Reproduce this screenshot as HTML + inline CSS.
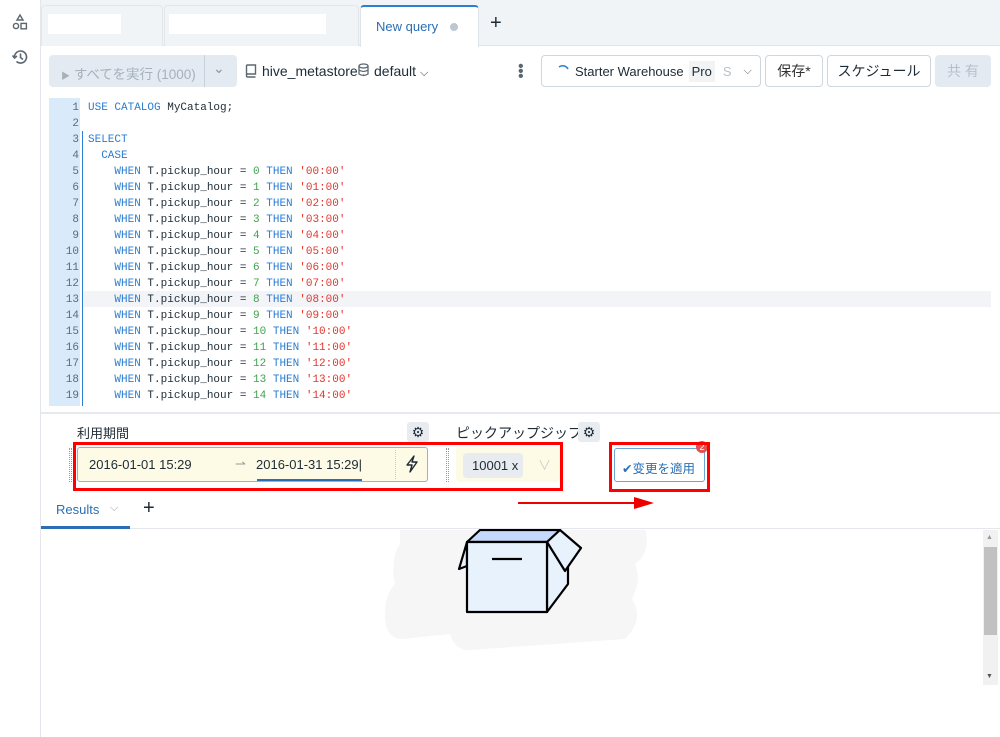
<!DOCTYPE html>
<html><head><meta charset="utf-8"><style>
*{box-sizing:border-box;margin:0;padding:0}
body{width:1000px;height:737px;overflow:hidden;background:#fff;font-family:"Liberation Sans","Noto Sans CJK JP",sans-serif;color:#1d2b36;position:relative;font-size:13px}
.abs{position:absolute;white-space:nowrap}
.side{left:0;top:0;width:41px;height:737px;border-right:1px solid #e3e7eb;background:#fff}
.tabs{left:41px;top:0;width:959px;height:46px;background:#f1f4f7;border-bottom:1px solid #dfe4e9}
.code{font-family:"Liberation Mono",monospace;font-size:11px;line-height:16px;white-space:pre}
.k{color:#2a7ed3}.n{color:#3fa34d}.s{color:#e0372c}
.btn{border:1px solid #cfd6dd;border-radius:4px;background:#fff;height:32px;top:55px;display:flex;align-items:center;justify-content:center;font-size:14px}
</style></head><body>
<div class="abs side">
<svg class="abs" style="left:11px;top:13px" width="18" height="18" viewBox="0 0 18 18" fill="none" stroke="#5b6670" stroke-width="1.4"><path d="M9 2 L12 7 L6 7 Z"/><circle cx="5" cy="13" r="2.6"/><rect x="10" y="10.4" width="5.4" height="5.4"/></svg>
<svg class="abs" style="left:11px;top:48px" width="18" height="18" viewBox="0 0 18 18" fill="none" stroke="#5b6670" stroke-width="1.6"><path d="M3.5 9 A6 6 0 1 1 5.5 13.5"/><path d="M1.5 7.5 L3.5 10 L6 8"/><path d="M9.5 5.5 V9.5 L12 11.5"/></svg>
</div>
<div class="abs tabs"></div>
<div class="abs" style="left:41px;top:5px;width:122px;height:41px;background:#f1f4f7;border:1px solid #e3e7eb;border-bottom:none;border-radius:4px 4px 0 0"></div>
<div class="abs" style="left:48px;top:14px;width:73px;height:20px;background:#fff"></div>
<div class="abs" style="left:164px;top:5px;width:195px;height:41px;background:#f1f4f7;border:1px solid #e3e7eb;border-bottom:none;border-radius:4px 4px 0 0"></div>
<div class="abs" style="left:169px;top:14px;width:157px;height:20px;background:#fff"></div>
<div class="abs" style="left:360px;top:5px;width:119px;height:42px;background:#fff;border:1px solid #dfe4e9;border-top:2px solid #2a7ed3;border-bottom:none;border-radius:4px 4px 0 0;font-size:13px;color:#2a6fb5;padding:12px 0 0 15px">New query <span style="display:inline-block;width:8px;height:8px;border-radius:50%;background:#bcc7d2;margin-left:8px"></span></div>
<div class="abs" style="left:490px;top:12px;font-size:20px;color:#1d2b36">+</div>

<div class="abs" style="left:49px;top:55px;width:188px;height:32px;background:#e3eaf1;border-radius:4px;color:#a6b1bc;font-size:13.5px;padding:8px 0 0 12px"><span style="font-size:9px">▶</span> すべてを実行 (1000)</div>
<div class="abs" style="left:204px;top:55px;width:1px;height:32px;background:#c7d1db"></div>
<div class="abs" style="left:213px;top:60px;color:#8a96a2;font-size:14px">⌄</div>
<svg class="abs" style="left:245px;top:64px" width="12" height="14" viewBox="0 0 12 14" fill="none" stroke="#5b6670" stroke-width="1.4"><path d="M1.5 11 V2 Q1.5 1 2.5 1 H10.5 V10 H2.5 Q1.5 10 1.5 11.5 Q1.5 13 2.5 13 H10.5"/></svg>
<div class="abs" style="left:262px;top:63px;font-size:14px">hive_metastore .</div>
<svg class="abs" style="left:358px;top:63px" width="11" height="14" viewBox="0 0 11 14" fill="none" stroke="#5b6670" stroke-width="1.3"><ellipse cx="5.5" cy="3" rx="4.5" ry="2"/><path d="M1 3 V11 Q5.5 14 10 11 V3 M1 7 Q5.5 10 10 7"/></svg>
<div class="abs" style="left:374px;top:63px;font-size:14px">default <span style="font-size:11px">⌵</span></div>
<div class="abs" style="left:518px;top:64px;width:4px;line-height:5px;color:#5b6670;font-size:16px">•<br>•<br>•</div>
<div class="abs btn" style="left:541px;width:220px;justify-content:flex-start;padding-left:14px;font-size:13px;white-space:nowrap">
<svg width="14" height="14" viewBox="0 0 14 14" fill="none" stroke="#2a7ed3" stroke-width="1.5"><path d="M3 3 A6 6 0 0 1 12 5"/></svg>
<span style="margin-left:5px">Starter Warehouse</span><span style="background:#f1f3f5;padding:3px 3px;margin-left:5px">Pro</span><span style="color:#b8c0c8;margin-left:8px">S</span><span style="margin-left:12px;font-size:11px;color:#5b6670">⌵</span></div>
<div class="abs btn" style="left:765px;width:58px;color:#333">保存*</div>
<div class="abs btn" style="left:827px;width:104px">スケジュール</div>
<div class="abs btn" style="left:935px;width:56px;background:#e3eaf1;border-color:#e3eaf1;color:#b5c0cb">共 有</div>

<div class="abs" style="left:49px;top:98px;width:31px;height:308px;background:#d9eafb"></div>
<div class="abs" style="left:82px;top:131px;width:1px;height:275px;background:#2a7ed3"></div>
<div class="abs" style="left:83px;top:291px;width:908px;height:16px;background:#f2f4f8"></div>
<div class="abs code" style="left:49px;top:100px;width:30px;text-align:right;color:#5e6b77">1
2
3
4
5
6
7
8
9
10
11
12
13
14
15
16
17
18
19</div>
<div class="abs code" style="left:88px;top:100px"><span class="k">USE CATALOG</span> MyCatalog;

<span class="k">SELECT</span>
  <span class="k">CASE</span>
    <span class="k">WHEN</span> T.pickup_hour = <span class="n">0</span> <span class="k">THEN</span> <span class="s">'00:00'</span>
    <span class="k">WHEN</span> T.pickup_hour = <span class="n">1</span> <span class="k">THEN</span> <span class="s">'01:00'</span>
    <span class="k">WHEN</span> T.pickup_hour = <span class="n">2</span> <span class="k">THEN</span> <span class="s">'02:00'</span>
    <span class="k">WHEN</span> T.pickup_hour = <span class="n">3</span> <span class="k">THEN</span> <span class="s">'03:00'</span>
    <span class="k">WHEN</span> T.pickup_hour = <span class="n">4</span> <span class="k">THEN</span> <span class="s">'04:00'</span>
    <span class="k">WHEN</span> T.pickup_hour = <span class="n">5</span> <span class="k">THEN</span> <span class="s">'05:00'</span>
    <span class="k">WHEN</span> T.pickup_hour = <span class="n">6</span> <span class="k">THEN</span> <span class="s">'06:00'</span>
    <span class="k">WHEN</span> T.pickup_hour = <span class="n">7</span> <span class="k">THEN</span> <span class="s">'07:00'</span>
    <span class="k">WHEN</span> T.pickup_hour = <span class="n">8</span> <span class="k">THEN</span> <span class="s">'08:00'</span>
    <span class="k">WHEN</span> T.pickup_hour = <span class="n">9</span> <span class="k">THEN</span> <span class="s">'09:00'</span>
    <span class="k">WHEN</span> T.pickup_hour = <span class="n">10</span> <span class="k">THEN</span> <span class="s">'10:00'</span>
    <span class="k">WHEN</span> T.pickup_hour = <span class="n">11</span> <span class="k">THEN</span> <span class="s">'11:00'</span>
    <span class="k">WHEN</span> T.pickup_hour = <span class="n">12</span> <span class="k">THEN</span> <span class="s">'12:00'</span>
    <span class="k">WHEN</span> T.pickup_hour = <span class="n">13</span> <span class="k">THEN</span> <span class="s">'13:00'</span>
    <span class="k">WHEN</span> T.pickup_hour = <span class="n">14</span> <span class="k">THEN</span> <span class="s">'14:00'</span></div>
<div class="abs" style="left:41px;top:412px;width:959px;height:2px;background:#e6eaee"></div>

<div class="abs" style="left:77px;top:423px;font-size:13px">利用期間</div>
<div class="abs" style="left:407px;top:422px;width:22px;height:20px;background:#e8ecf0;border-radius:3px;text-align:center;font-size:14px;line-height:20px">⚙</div>
<div class="abs" style="left:456px;top:423px;font-size:14px">ピックアップジップ</div>
<div class="abs" style="left:578px;top:422px;width:22px;height:20px;background:#e8ecf0;border-radius:3px;text-align:center;font-size:14px;line-height:20px">⚙</div>
<div class="abs" style="left:69px;top:448px;width:3px;height:34px;border-left:1px dotted #999;border-right:1px dotted #999"></div>
<div class="abs" style="left:77px;top:447px;width:351px;height:35px;background:#fdfbe6;border:1px solid #8fb3d9;border-radius:3px"></div>
<div class="abs" style="left:89px;top:457px;font-size:13px">2016-01-01 15:29</div>
<div class="abs" style="left:235px;top:456px;font-size:13px;color:#999">⇀</div>
<div class="abs" style="left:256px;top:457px;font-size:13px">2016-01-31 15:29|</div>
<div class="abs" style="left:257px;top:479px;width:105px;height:2px;background:#2a6fb5"></div>
<div class="abs" style="left:395px;top:450px;width:1px;height:29px;border-left:1px dotted #ccc"></div>
<svg class="abs" style="left:405px;top:455px" width="14" height="18" viewBox="0 0 14 18" fill="none" stroke="#1d2b36" stroke-width="1.4" stroke-linejoin="round"><path d="M9 1 L2 10 H7 L5 17 L12 7 H7 Z"/></svg>
<div class="abs" style="left:446px;top:448px;width:3px;height:34px;border-left:1px dotted #999;border-right:1px dotted #999"></div>
<div class="abs" style="left:456px;top:447px;width:104px;height:35px;background:#fdfbe6;border-radius:3px"></div>
<div class="abs" style="left:463px;top:453px;width:60px;height:25px;background:#e8ebef;border-radius:4px;font-size:13px;padding:5px 0 0 9px">10001 x</div>
<div class="abs" style="left:538px;top:455px;color:#ccc;font-size:13px">∨</div>
<div class="abs" style="left:73px;top:442px;width:490px;height:49px;border:3px solid #f00"></div>
<div class="abs" style="left:614px;top:448px;width:91px;height:34px;border:1px solid #6fa3d6;border-radius:3px;color:#2a6fb5;font-size:12.5px;padding:9px 0 0 7px">✔变更を適用</div>
<div class="abs" style="left:696px;top:441px;width:12px;height:12px;border-radius:50%;background:#e25050;color:#fff;font-size:9px;text-align:center;line-height:12px">2</div>
<div class="abs" style="left:609px;top:442px;width:101px;height:50px;border:3px solid #f00"></div>
<div class="abs" style="left:518px;top:502px;width:120px;height:2px;background:#e00"></div>
<svg class="abs" style="left:634px;top:497px" width="20" height="12"><path d="M0 0 L20 6 L0 12Z" fill="#e00"/></svg>

<div class="abs" style="left:56px;top:502px;font-size:13px;color:#2a6fb5">Results</div>
<div class="abs" style="left:110px;top:502px;font-size:11px;color:#999">⌵</div>
<div class="abs" style="left:143px;top:497px;font-size:20px">+</div>
<div class="abs" style="left:41px;top:528px;width:959px;height:1px;background:#e3e7eb"></div>
<div class="abs" style="left:41px;top:526px;width:89px;height:3px;background:#2a6fb5"></div>

<svg class="abs" style="left:370px;top:529px" width="290" height="130" viewBox="0 0 290 130">
<path d="M30 1 H276 Q280 25 265 35 Q272 50 262 70 Q275 90 255 110 L100 121 Q85 122 80 105 L32 110 Q15 110 15 85 Q15 65 25 55 Q20 30 30 15Z" fill="#f6f6f6"/>
<g stroke="#000" stroke-width="2.2" stroke-linejoin="round"><path d="M97 13 L110 1 H190 L177 13Z" fill="#c4d9fb"/><path d="M97 13 L89 40 L97 37Z" fill="#e8f2fd"/><path d="M177 13 L198 35 L198 55 L177 83Z" fill="#e8f2fd"/><path d="M177 13 L190 1 L211 19 L195 42Z" fill="#e8f2fd"/><rect x="97" y="13" width="80" height="70" fill="#e8f2fd"/><path d="M122 30 H152"/></g></svg>
<div class="abs" style="left:983px;top:530px;width:15px;height:155px;background:#f1f1f1"></div>
<div class="abs" style="left:984px;top:547px;width:13px;height:88px;background:#c1c1c1"></div>
<div class="abs" style="left:986px;top:534px;font-size:7px;color:#999">▲</div>
<div class="abs" style="left:986px;top:673px;font-size:7px;color:#555">▼</div>
</body></html>
